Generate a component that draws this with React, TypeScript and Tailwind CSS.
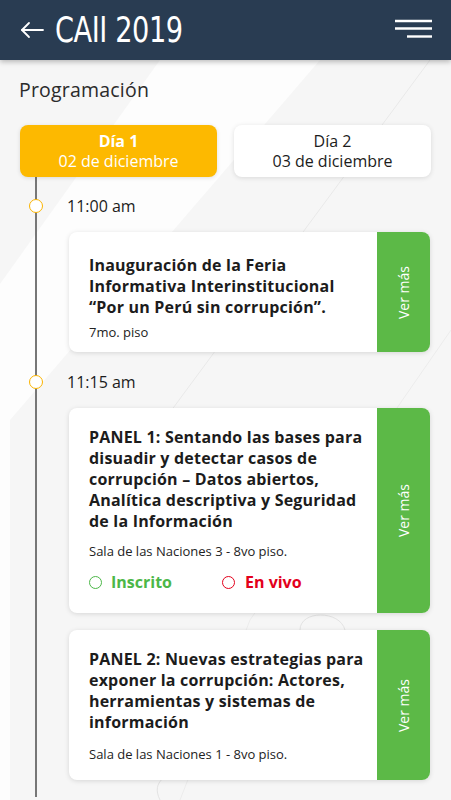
import React from "react";

type Evento = {
  hora: string;
  titulo: string[];
  lugar: string;
  alto: string;
  pt: string;
  gap: string;
  estado?: boolean;
  mt: string;
};

const eventos: Evento[] = [
  {
    hora: "11:00 am",
    titulo: ["Inauguración de la Feria", "Informativa Interinstitucional", "“Por un Perú sin corrupción”."],
    lugar: "7mo. piso",
    alto: "h-[120px]",
    pt: "pt-[23px]",
    gap: "mt-[5px]",
    mt: "mt-[14px]",
  },
  {
    hora: "11:15 am",
    titulo: [
      "PANEL 1: Sentando las bases para",
      "disuadir y detectar casos de",
      "corrupción – Datos abiertos,",
      "Analítica descriptiva y Seguridad",
      "de la Información",
    ],
    lugar: "Sala de las Naciones 3 - 8vo piso.",
    alto: "h-[205px]",
    pt: "pt-[19px]",
    gap: "mt-[10px]",
    estado: true,
    mt: "mt-[14px]",
  },
];

function Tarjeta({ e }: { e: Evento }) {
  return (
    <div className={`ml-[32px] mr-[21px] flex overflow-hidden rounded-[8px] bg-white shadow-[0_1px_5px_rgba(0,0,0,0.13)] ${e.alto}`}>
      <div className={`flex-1 pl-[20px] pr-[8px] ${e.pt}`}>
        <div className="text-[16px] font-bold leading-[21px] tracking-[0.2px] text-[#1c1c1c]">
          {e.titulo.map((l) => (
            <div key={l} className="whitespace-nowrap">{l}</div>
          ))}
        </div>
        <div className={`text-[13px] leading-[18px] text-[#222] ${e.gap}`}>{e.lugar}</div>
        {e.estado && (
          <div className="mt-[12px] flex items-center text-[16px] font-bold leading-[21px]">
            <div className="flex w-[133px] items-center gap-[9px] text-[#4cb748]">
              <span className="h-[13px] w-[13px] rounded-full border-[1.5px] border-[#4cb748]" />
              Inscrito
            </div>
            <div className="flex items-center gap-[10px] text-[#e3001b]">
              <span className="h-[13px] w-[13px] rounded-full border-[1.5px] border-[#e3001b]" />
              En vivo
            </div>
          </div>
        )}
      </div>
      <div className="flex w-[53px] shrink-0 items-center justify-center bg-[#5cb947]">
        <span className="-rotate-90 whitespace-nowrap text-[14px] text-white">Ver más</span>
      </div>
    </div>
  );
}

function Hora({ texto, mt }: { texto: string; mt: string }) {
  return (
    <div className={`relative flex h-[24px] items-center pl-[30px] text-[16px] text-[#1c1c1c] ${mt}`}>
      <span className="absolute left-[-8px] top-[5px] h-[14px] w-[14px] rounded-full border-[1.5px] border-[#fbb400] bg-white" />
      {texto}
    </div>
  );
}

export default function App() {
  return (
    <div className="relative h-[800px] w-[451px] overflow-hidden bg-[#f6f6f6] font-['Open_Sans',sans-serif]">
      <svg className="pointer-events-none absolute inset-0" width="451" height="800" viewBox="0 0 451 800">
        <path d="M160 60 L-40 340 L-40 800 L10 800 L10 420 L320 60 Z" fill="#fdfdfd" />
        <path d="M430 60 L120 480" stroke="#e9e9e9" strokeWidth="1" fill="none" />
        <path d="M451 330 L250 620 L180 800" stroke="#ececec" strokeWidth="1" fill="none" />
        <path d="M300 630 C 300 610, 340 610, 345 630" stroke="#e3e3e3" strokeWidth="1" fill="none" />
        <path d="M160 800 C 150 780, 170 775, 175 770" stroke="#e3e3e3" strokeWidth="1" fill="none" />
      </svg>

      <header className="relative z-10 flex h-[60px] items-center justify-between bg-[#293c52] pl-[19px] pr-[19px] shadow-[0_2px_5px_rgba(0,0,0,0.25)]">
        <div className="flex items-center gap-[10px]">
          <svg width="26" height="20" viewBox="0 0 26 20" fill="none" stroke="white" strokeWidth="1.8" strokeLinecap="round" strokeLinejoin="round">
            <path d="M24 10 H3" />
            <path d="M10 3 L3 10 L10 17" />
          </svg>
          <span className="origin-left scale-x-[0.84] whitespace-nowrap font-['DejaVu_Sans_Condensed',sans-serif] text-[36px] font-normal leading-none tracking-[-0.5px] text-white">
            CAII 2019
          </span>
        </div>
        <svg width="38" height="22" viewBox="0 0 38 22" stroke="white" strokeWidth="2.4">
          <path d="M1 2 H38" />
          <path d="M1 9.5 H38" />
          <path d="M13 17.5 H38" />
        </svg>
      </header>

      <main className="relative">
        <h1 className="mt-[17px] pl-[19px] text-[19.5px] leading-[26px] tracking-[0.2px] text-[#2b2b2b]">Programación</h1>

        <div className="mt-[22px] flex gap-[17px] px-[20px]">
          <div className="flex h-[52px] w-[197px] flex-col items-center justify-center rounded-[8px] bg-[#fdb900] text-[16px] leading-[20px] text-white shadow-[0_1px_4px_rgba(0,0,0,0.12)]">
            <span className="font-bold">Día 1</span>
            <span>02 de diciembre</span>
          </div>
          <div className="flex h-[52px] w-[197px] flex-col items-center justify-center rounded-[8px] bg-white text-[16px] leading-[20px] text-[#1c1c1c] shadow-[0_1px_5px_rgba(0,0,0,0.12)]">
            <span>Día 2</span>
            <span>03 de diciembre</span>
          </div>
        </div>

        <div className="ml-[35px] flex h-[620px] flex-col border-l-2 border-[#777]">
          {eventos.map((e) => (
            <React.Fragment key={e.hora}>
              <Hora texto={e.hora} mt={e.hora === "11:00 am" ? "mt-[17px]" : "mt-[18px]"} />
              <div className={e.mt}>
                <Tarjeta e={e} />
              </div>
            </React.Fragment>
          ))}
          <div className="mt-[17px]">
            <Tarjeta
              e={{
                hora: "",
                titulo: [
                  "PANEL 2: Nuevas estrategias para",
                  "exponer la corrupción: Actores,",
                  "herramientas y sistemas de",
                  "información",
                ],
                lugar: "Sala de las Naciones 1 - 8vo piso.",
                alto: "h-[150px]",
                pt: "pt-[19px]",
                gap: "mt-[12px]",
                mt: "",
              }}
            />
          </div>
        </div>
      </main>
    </div>
  );
}
